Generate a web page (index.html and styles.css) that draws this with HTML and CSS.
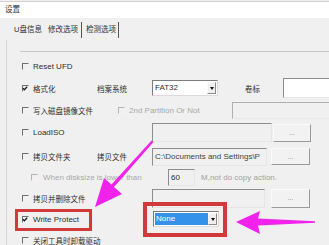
FILE: index.html
```html
<!DOCTYPE html>
<html lang="zh-CN">
<head>
  <meta charset="UTF-8">
  <title>设置</title>
  <link rel="stylesheet" href="styles.css">
</head>
<body>
  <div class="window">
    <div class="titlebar">设置</div>
    <div class="tabs">
      <span class="tab first">U盘信息</span>
      <span class="tab active">修改选项</span>
      <span class="tab last">检测选项</span>
    </div>

    <div class="panel">
      <div class="group">
        <!-- Reset UFD -->
        <div class="row">
          <label class="check"><span class="box"></span><span>Reset UFD</span></label>
        </div>

        <!-- 格式化 -->
        <div class="row">
          <label class="check c1"><span class="box on"><svg viewBox="0 0 7 7"><path d="M1 3.2 L2.8 5 L6 1.4" /></svg></span><span class="zh">格式化</span></label>
          <span class="c2 zh">档案系统</span>
          <div class="select fat">
            <span class="value">FAT32</span>
            <span class="drop"><i></i></span>
          </div>
          <span class="zh lbl-vol">卷标</span>
          <div class="field white vol"></div>
        </div>

        <!-- 写入磁盘镜像文件 -->
        <div class="row">
          <label class="check c1"><span class="box"></span><span class="zh">写入磁盘镜像文件</span></label>
          <label class="check off part"><span class="box"></span><span>2nd Partition Or Not</span></label>
          <div class="field disabled image"></div>
        </div>

        <!-- LoadISO -->
        <div class="row">
          <label class="check c1"><span class="box"></span><span>LoadISO</span></label>
          <span class="c2"></span>
          <div class="field iso"></div>
          <button class="dots iso-btn">...</button>
        </div>

        <!-- 拷贝文件夹 -->
        <div class="row">
          <label class="check c1"><span class="box"></span><span class="zh">拷贝文件夹</span></label>
          <span class="c2 zh">拷贝文件</span>
          <div class="field path">C:\Documents and Settings\P</div>
          <button class="dots path-btn">...</button>
        </div>

        <!-- When disksize -->
        <div class="row">
          <label class="check off size"><span class="box"></span><span class="size-text">When disksize is lower than</span></label>
          <div class="field num">60</div>
          <span class="muted">M,not do copy action.</span>
        </div>

        <!-- 拷贝并删除文件 -->
        <div class="row">
          <label class="check c1"><span class="box"></span><span class="zh">拷贝并删除文件</span></label>
          <span class="c2"></span>
          <div class="field del"></div>
          <button class="dots del-btn">...</button>
        </div>

        <!-- Write Protect -->
        <div class="row">
          <label class="check c1"><span class="box on"><svg viewBox="0 0 7 7"><path d="M1 3.2 L2.8 5 L6 1.4" /></svg></span><span>Write Protect</span></label>
          <span class="c2"></span>
          <div class="select wp">
            <span class="value picked">None</span>
            <span class="drop"><i></i></span>
          </div>
        </div>

        <!-- 关闭工具时卸载驱动 -->
        <div class="row">
          <label class="check"><span class="box"></span><span class="zh">关闭工具时卸载驱动</span></label>
        </div>
      </div>
    </div>

    <!-- annotations drawn over the dialog -->
    <svg class="marks" viewBox="0 0 329 245" width="329" height="245">
      <rect x="16.5" y="210.5" width="74" height="19" fill="none" stroke="#d2393a" stroke-width="3" />
      <rect x="145" y="204" width="80" height="31" fill="none" stroke="#d2393a" stroke-width="4" />
      <polygon fill="#f022ec" points="236,222 260,211 258,218.5 315,221.2 315,222.8 258,225.5 260,234" />
      <polygon fill="#f022ec" points="95,207 104,178 111.5,184.5 151.5,140.5 153.5,142 114,187 122,194" />
    </svg>
  </div>
</body>
</html>
```

FILE: styles.css
```css
* {
  box-sizing: border-box;
}

body {
  margin: 0;
  background-color: #f0f0f0;
  font-family: "Liberation Sans", "Noto Sans CJK SC", sans-serif;
  font-size: 8px;
  color: #2e2e2e;
}

.window {
  position: relative;
  width: 329px;
  height: 245px;
  overflow: hidden;
}

.zh {
  font-size: 7.5px;
}

.titlebar {
  height: 17px;
  margin-top: 1px;
  border-top: 1px solid #cfcfcf;
  background-color: #fff;
  padding-left: 5px;
  font-size: 7.5px;
  line-height: 15px;
}

.tabs {
  display: flex;
  align-items: flex-start;
  height: 22px;
  padding-top: 4px;
  padding-left: 14px;
  font-size: 7.5px;
}

.tab {
  height: 16px;
  line-height: 16px;
}

.tab.first {
  margin-right: 6px;
}

.tab.active {
  padding-right: 3px;
  border-right: 1px solid #555;
}

.tab.last {
  padding-left: 4px;
  padding-right: 2px;
  border-right: 1px solid #555;
}

.panel {
  height: 205px;
  margin-left: 6px;
  border-left: 1px solid #d6d6d6;
  padding: 11px 0 0 13px;
}

.group {
  display: grid;
  grid-template-rows: 22px 22px 22px 23px 25px 17px 24px 18px 24px;
  border-top: 1px solid #c9c9c9;
  padding: 3px 0 0 2px;
}

.row {
  display: flex;
  align-items: center;
  white-space: nowrap;
}

.check {
  display: flex;
  align-items: center;
  gap: 4px;
}

.box {
  display: inline-flex;
  width: 7px;
  height: 7px;
  border-top: 1px solid #6f6f6f;
  border-left: 1px solid #6f6f6f;
  border-right: 1px solid #f4f4f4;
  border-bottom: 1px solid #f4f4f4;
}

.box svg {
  width: 7px;
  height: 7px;
  margin: -1px 0 0 -1px;
}

.box path {
  fill: none;
  stroke: #222;
  stroke-width: 1.6;
}

.check.off {
  color: #a8a8a8;
}

.check.off .box {
  border-top-color: #b4b4b4;
  border-left-color: #b4b4b4;
}

.c1 {
  width: 75px;
}

.c2 {
  width: 55px;
}

.field {
  height: 18px;
  border: 1px solid;
  border-color: #8d8d8d #e6e6e6 #e6e6e6 #8d8d8d;
  background-color: #f0f0f0;
  padding-left: 2px;
  overflow: hidden;
  line-height: 16px;
}

.field.white {
  background-color: #fff;
}

.field.disabled {
  border-color: #b0b0b0 #e8e8e8 #e8e8e8 #b0b0b0;
}

.vol {
  width: 60px;
  height: 20px;
  margin-left: -1px;
}

.lbl-vol {
  width: 39px;
  margin-left: 27px;
}

.part {
  width: 114px;
  margin-left: 21px;
}

.image {
  width: 110px;
  height: 17px;
}

.iso {
  width: 120px;
  height: 19px;
}

.path {
  width: 115px;
  color: #444;
}

.size {
  width: 137px;
  margin-left: 9px;
  gap: 5px;
}

.num {
  width: 27px;
  height: 17px;
  line-height: 15px;
}

.muted {
  margin-left: 6px;
  color: #a0a0a0;
}

.del {
  width: 113px;
  height: 19px;
}

.dots {
  width: 39px;
  height: 18px;
  padding: 0;
  border: 1px solid;
  border-color: #fafafa #9a9a9a #9a9a9a #fafafa;
  background-color: #f2f2f2;
  color: #888;
  font-family: "Liberation Sans", sans-serif;
  font-size: 7px;
  line-height: 14px;
}

.iso-btn {
  width: 38px;
  margin-left: 1px;
}

.path-btn {
  height: 17px;
  margin-left: 4px;
}

.del-btn {
  height: 19px;
  margin-left: 6px;
}

.select {
  display: flex;
  width: 66px;
  height: 16px;
  border: 1px solid;
  border-color: #7c7c7c #dcdcdc #dcdcdc #7c7c7c;
  background-color: #fff;
  padding: 1px;
}

.select .value {
  flex: 1;
  padding-left: 1px;
  line-height: 12px;
}

.select .picked {
  background-color: #3592ea;
  color: #fff;
}

.select .drop {
  display: flex;
  align-items: center;
  justify-content: center;
  width: 9px;
  border: 1px solid;
  border-color: #fafafa #8a8a8a #8a8a8a #fafafa;
  background-color: #f0f0f0;
}

.select .drop i {
  width: 0;
  height: 0;
  border-left: 2.5px solid transparent;
  border-right: 2.5px solid transparent;
  border-top: 3px solid #111;
}

.wp {
  margin-left: 1px;
}

.marks {
  position: absolute;
  top: 0;
  left: 0;
  pointer-events: none;
}
```
